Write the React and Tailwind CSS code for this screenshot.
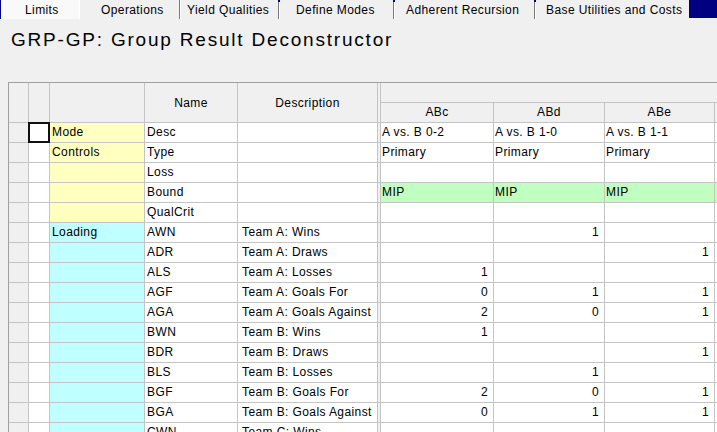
import React from "react";

const rows = [
  { label: "Mode", lbg: "y", name: "Desc", desc: "", vals: ["A vs. B 0-2", "A vs. B 1-0", "A vs. B 1-1"], text: true },
  { label: "Controls", lbg: "y", name: "Type", desc: "", vals: ["Primary", "Primary", "Primary"], text: true },
  { label: "", lbg: "y", name: "Loss", desc: "", vals: ["", "", ""], text: true },
  { label: "", lbg: "y", name: "Bound", desc: "", vals: ["MIP", "MIP", "MIP"], text: true, green: true },
  { label: "", lbg: "y", name: "QualCrit", desc: "", vals: ["", "", ""], text: true },
  { label: "Loading", lbg: "c", name: "AWN", desc: "Team A: Wins", vals: ["", "1", ""] },
  { label: "", lbg: "c", name: "ADR", desc: "Team A: Draws", vals: ["", "", "1"] },
  { label: "", lbg: "c", name: "ALS", desc: "Team A: Losses", vals: ["1", "", ""] },
  { label: "", lbg: "c", name: "AGF", desc: "Team A: Goals For", vals: ["0", "1", "1"] },
  { label: "", lbg: "c", name: "AGA", desc: "Team A: Goals Against", vals: ["2", "0", "1"] },
  { label: "", lbg: "c", name: "BWN", desc: "Team B: Wins", vals: ["1", "", ""] },
  { label: "", lbg: "c", name: "BDR", desc: "Team B: Draws", vals: ["", "", "1"] },
  { label: "", lbg: "c", name: "BLS", desc: "Team B: Losses", vals: ["", "1", ""] },
  { label: "", lbg: "c", name: "BGF", desc: "Team B: Goals For", vals: ["2", "0", "1"] },
  { label: "", lbg: "c", name: "BGA", desc: "Team B: Goals Against", vals: ["0", "1", "1"] },
  { label: "", lbg: "c", name: "CWN", desc: "Team C: Wins", vals: ["", "", ""] },
];

const tabs = [
  { t: "Limits", w: "w-[79px]", pl: "pl-[24px]", cls: "bg-[#f9f9f9] border-r border-white" },
  { t: "Operations", w: "w-[99px]", pl: "pl-[21px]", cls: "" },
  { t: "Yield Qualities", w: "w-[99px]", pl: "pl-[7px]", cls: "sep" },
  { t: "Define Modes", w: "w-[115px]", pl: "pl-[17px]", cls: "sep dot" },
  { t: "Adherent Recursion", w: "w-[141px]", pl: "pl-[12px]", cls: "sep dot" },
  { t: "Base Utilities and Costs", w: "w-[155px]", pl: "pl-[11px]", cls: "sep dot" },
];

function Tab({ tab }) {
  const sep = tab.cls.includes("sep");
  const dot = tab.cls.includes("dot");
  return (
    <div
      className={`relative h-[19px] shrink-0 ${tab.w} ${tab.pl} pt-[1px] leading-[19px] ${
        sep ? "border-l border-[#7a7a7a] shadow-[inset_1px_0_0_#ffffff]" : ""
      } ${tab.cls.includes("bg-") ? tab.cls : ""}`}
    >
      {dot && <div className="absolute -left-[1px] top-0 h-[2px] w-[2px] bg-[#000080]" />}
      {tab.t}
    </div>
  );
}

export default function App() {
  return (
    <div className="relative h-[432px] w-[717px] overflow-hidden bg-[#f0f0f0] font-['Liberation_Sans',Arial,sans-serif] text-[12px] tracking-[0.4px] text-black">
      {/* Tabs */}
      <div className="flex h-[19px]">
        <div className="h-[19px] w-[1px] shrink-0 bg-[#000080]" />
        {tabs.map((t) => (
          <Tab key={t.t} tab={t} />
        ))}
        <div className="h-[18px] flex-1 bg-[#000080]" />
      </div>

      {/* Title */}
      <div className="mt-[11px] h-[20px] pl-[11px] text-[19px] leading-[20px] tracking-[1.8px]">
        GRP-GP: Group Result Deconstructor
      </div>

      {/* Grid */}
      <div className="ml-[8px] mt-[32px] w-max border border-[#a0a0a0] bg-[#c4c4c4]">
        <div className="grid grid-cols-[19px_20px_94px_92px_139px_2px_112px_110px_109px_60px] auto-rows-[19px] gap-px">
          {/* header */}
          <div className="row-span-2 bg-[#f0f0f0]" />
          <div className="row-span-2 bg-[#f0f0f0]" />
          <div className="row-span-2 bg-[#f0f0f0]" />
          <div className="row-span-2 flex items-center justify-center bg-[#f0f0f0]">Name</div>
          <div className="row-span-2 flex items-center justify-center bg-[#f0f0f0]">Description</div>
          <div className="row-span-2 bg-[#f0f0f0]" />
          <div className="col-span-4 bg-[#f0f0f0]" />
          <div className="bg-[#f0f0f0] text-center leading-[19px]">ABc</div>
          <div className="bg-[#f0f0f0] text-center leading-[19px]">ABd</div>
          <div className="bg-[#f0f0f0] text-center leading-[19px]">ABe</div>
          <div className="bg-[#f0f0f0]" />

          {rows.map((r, i) => {
            const lbg = r.lbg === "y" ? "bg-[#ffffc0]" : "bg-[#c0ffff]";
            const vbg = r.green ? "bg-[#c0ffc0]" : "bg-white";
            return (
              <React.Fragment key={i}>
                <div className="bg-[#f0f0f0]" />
                {i === 0 ? (
                  <div className="relative bg-white">
                    <div className="absolute -bottom-[1px] -left-[1px] -right-[1px] -top-[1px] border-2 border-[#111]" />
                  </div>
                ) : (
                  <div className="bg-white" />
                )}
                <div className={`${lbg} pl-[2px] leading-[19px]`}>{r.label}</div>
                <div className="bg-white pl-[2px] leading-[19px]">{r.name}</div>
                <div className="overflow-hidden whitespace-nowrap bg-white pl-[4px] leading-[19px]">{r.desc}</div>
                <div className="bg-[#f0f0f0]" />
                {r.vals.map((v, j) => (
                  <div
                    key={j}
                    className={`${vbg} leading-[19px] ${r.text ? "pl-[1px] text-left" : "pr-[5px] text-right"}`}
                  >
                    {v}
                  </div>
                ))}
                <div className={vbg} />
              </React.Fragment>
            );
          })}
        </div>
      </div>
    </div>
  );
}
